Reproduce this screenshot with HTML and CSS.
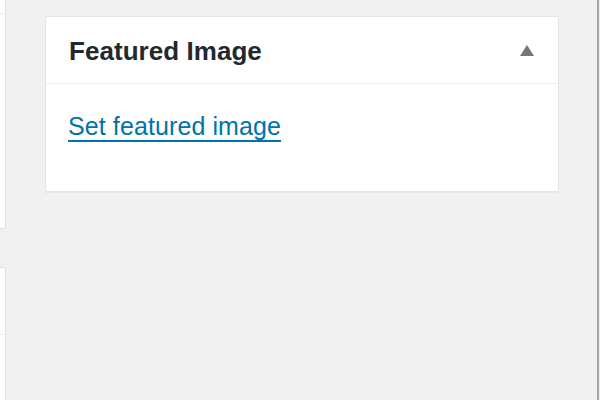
FILE: index.html
```html
<!DOCTYPE html>
<html>
<head>
<meta charset="utf-8">
<link rel="stylesheet" href="styles.css">
</head>
<body>
<div class="left">
  <div class="lpanel lpanel-top"><div class="lrow"></div></div>
  <div class="lpanel lpanel-bottom"><div class="lrow lrow-2"></div></div>
</div>
<div class="main">
  <div class="card">
    <div class="card-head">
      <h2 class="card-title">Featured Image</h2>
      <svg class="toggle" width="14" height="11" viewBox="0 0 14 11"><polygon points="7,0 14,11 0,11" fill="#72777c"/></svg>
    </div>
    <div class="card-body">
      <a class="set-link" href="#">Set featured image</a>
    </div>
  </div>
</div>
<div class="edge"><div class="edge-bar"></div></div>
</body>
</html>
```
FILE: styles.css
```css
html, body {
  margin: 0;
  padding: 0;
  height: 100%;
}
body {
  background: #f1f1f1;
  display: flex;
  font-family: "Liberation Sans", Arial, sans-serif;
  overflow: hidden;
}
.left {
  width: 6px;
  flex: none;
  display: flex;
  flex-direction: column;
}
.lpanel {
  background: #fff;
  border-right: 1px solid #e2e2e2;
  box-sizing: border-box;
}
.lpanel-top {
  height: 229px;
  border-bottom: 1px solid #e2e2e2;
}
.lrow {
  height: 13px;
  border-bottom: 1px solid #ececec;
}
.lpanel-bottom {
  margin-top: 38px;
  flex: 1;
  border-top: 1px solid #e2e2e2;
}
.lrow-2 {
  height: 66px;
}
.main {
  margin-left: 39px;
  padding-top: 16px;
  width: 514px;
  flex: none;
}
.card {
  background: #fff;
  border: 1px solid #e5e5e5;
  box-shadow: 0 1px 1px rgba(0,0,0,0.04);
}
.card-head {
  height: 67px;
  box-sizing: border-box;
  padding: 21px 24px 0 23px;
  border-bottom: 1px solid #eeeeee;
  display: flex;
  align-items: flex-start;
  justify-content: space-between;
}
.card-title {
  margin: 0;
  font-size: 26px;
  line-height: 26px;
  font-weight: bold;
  color: #23282d;
  letter-spacing: 0.05px;
}
.toggle {
  margin-top: 7px;
}
.card-body {
  height: 107px;
  box-sizing: border-box;
  padding: 30px 0 0 22px;
}
.set-link {
  font-size: 25px;
  line-height: 25px;
  color: #0073aa;
  letter-spacing: 0.1px;
  text-decoration: underline;
  text-decoration-thickness: 1.5px;
  text-underline-offset: 5px;
}
.edge {
  margin-left: auto;
  width: 4px;
  height: 100vh;
  flex: none;
  display: flex;
}
.edge-bar {
  width: 2px;
  margin-left: 1px;
  background: #a6a6a6;
}
```
